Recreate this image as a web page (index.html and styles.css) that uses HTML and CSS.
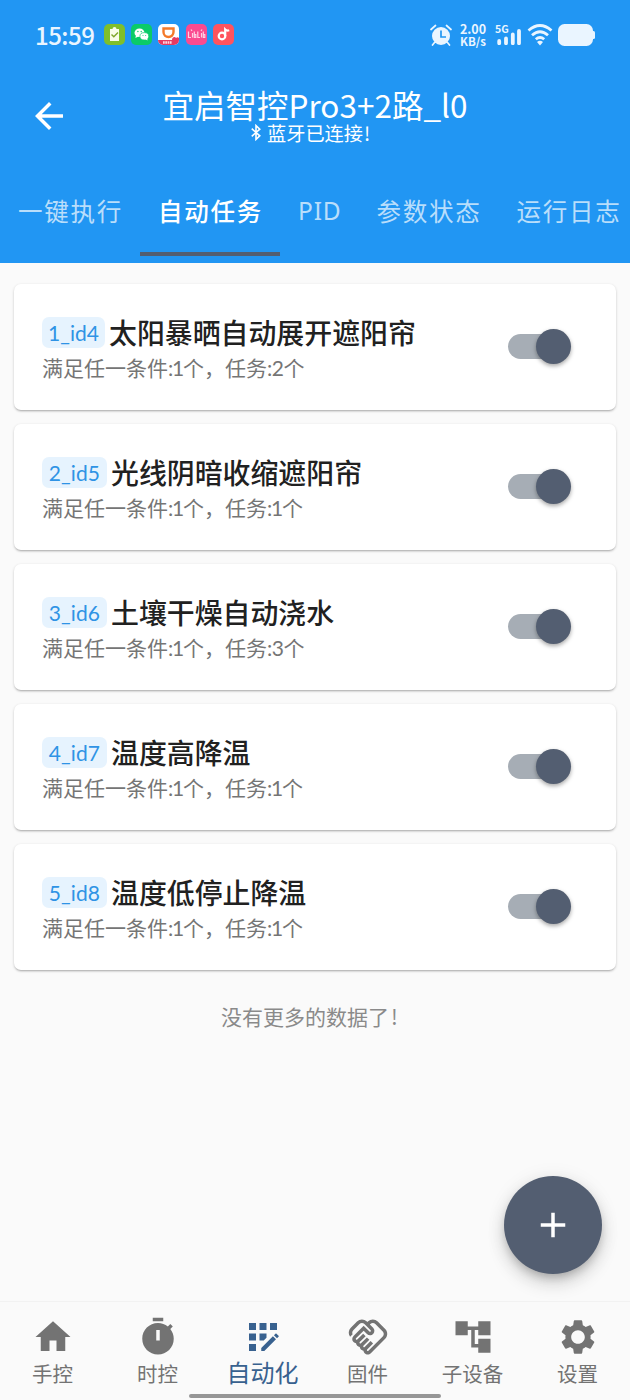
FILE: index.html
```html
<!DOCTYPE html>
<html lang="zh-CN">
<head>
<meta charset="utf-8">
<title>自动任务</title>
<link rel="stylesheet" href="styles.css">
</head>
<body>
<div class="screen">
  <header class="header">
    <div class="status">
      <div class="status-left">
        <span class="clock">15:59</span>
        <svg class="app" viewBox="0 0 21 21"><rect width="21" height="21" rx="5" fill="#7fbf2b"/><path d="M6 5h2.500a2 2 0 0 1 4 0H15v12H6z" fill="#f8fce8"/><path d="M7.500 10.500l2.300 2.300 4.200-4.300" fill="none" stroke="#7fa52b" stroke-width="1.400"/></svg>
        <svg class="app" viewBox="0 0 21 21"><rect width="21" height="21" rx="5" fill="#0bcb68"/><ellipse cx="8.500" cy="8.700" rx="5" ry="4.300" fill="#fff"/><path d="M5 11l-.6 3 3-1.500z" fill="#fff"/><ellipse cx="13.300" cy="12.300" rx="4.400" ry="3.700" fill="#fff" stroke="#0bcb68" stroke-width=".7"/><path d="M14 15l2.500 1.600-.3-2.600z" fill="#fff"/><g fill="#0bcb68"><circle cx="6.900" cy="7.500" r=".7"/><circle cx="10.200" cy="7.500" r=".7"/><circle cx="12" cy="11.500" r=".5"/><circle cx="14.700" cy="11.500" r=".5"/></g></svg>
        <svg class="app" viewBox="0 0 21 21"><rect width="21" height="21" rx="5" fill="#fff"/><path d="M5.500 4.500h10v3.500a5 5 0 0 1-10 0z" fill="none" stroke="#f47a2a" stroke-width="2.400"/><path d="M0 16h14c0-3 3-4 4-2 1-1 2-1 3 0v2a5 5 0 0 1-5 5H5a5 5 0 0 1-5-5z" fill="#e63b62"/><path d="M5 18.500h9" stroke="#ffd7df" stroke-width="2.400" stroke-dasharray="1.700 .6"/></svg>
        <svg class="app" viewBox="0 0 21 21"><rect width="21" height="21" rx="5" fill="#fb4a8f"/><path d="M2.500 7.500v6H5M6.500 9v4.500M8.300 7.500v6h1.500v-3H8.300M11.800 7.500v6H14M15.500 9v4.500M17.300 7.500v6h1.500v-3h-1.500M6 7L5 5.500M15 7l1-1.500" fill="none" stroke="#ffd0e4" stroke-width="1.200"/></svg>
        <svg class="app" viewBox="0 0 21 21"><rect width="21" height="21" rx="5" fill="#ff535e"/><circle cx="9" cy="12" r="3.300" fill="none" stroke="#fff" stroke-width="2.200"/><path d="M12.200 12V5.500q1.500 1.500 4 .8" fill="none" stroke="#fff" stroke-width="2.200"/></svg>
      </div>
      <div class="status-right">
        <svg class="alarm" viewBox="0 0 22 22"><circle cx="11" cy="12" r="9" fill="#eaf5ff"/><path d="M11 6.500V13h5" fill="none" stroke="#2196f3" stroke-width="1.700"/><path d="M1 5.500l4.500-4M21 5.500l-4.500-4M4.500 18.500L2.500 21M17.500 18.500l2 2.500" fill="none" stroke="#eaf5ff" stroke-width="1.700" stroke-linecap="round"/></svg>
        <div class="speed"><span>2.00</span><span>KB/s</span></div>
        <div class="cell"><span>5G</span><svg viewBox="0 0 24 16"><path d="M2.200 12v2.300M9 9.500v4.800M15.800 5.500v8.800M22 2v12.300" fill="none" stroke="#eaf5ff" stroke-width="3.800" stroke-linecap="round"/></svg></div>
        <svg class="wifi" viewBox="0 0 26 22"><path d="M1.500 6.500Q13-3.500 24.500 6.500M5 11.200q8-7 16 0M8.800 15.300q4.200-3.600 8.400 0" fill="none" stroke="#eaf5ff" stroke-width="2.800"/><path d="M10 18q3-2.300 6 0l-3 3.500z" fill="#eaf5ff"/></svg>
        <svg class="battery" viewBox="0 0 37 22"><rect width="35" height="22" rx="6.500" fill="#eaf5ff"/><path d="M34.500 7h1a1.500 1.500 0 0 1 1.500 1.500v5a1.500 1.500 0 0 1-1.500 1.500h-1z" fill="#eaf5ff"/></svg>
      </div>
    </div>
    <div class="appbar">
      <svg class="back" viewBox="0 0 24 24"><path d="M20 11H7.830l5.590-5.590L12 4l-8 8 8 8 1.410-1.410L7.830 13H20z"/></svg>
      <div class="heading">
        <h1>宜启智控Pro3+2路_l0</h1>
        <p><svg class="bt" viewBox="0 0 12 18"><path d="M1.500 5L10 12.500 6 16.300V1.700L10 5.500 1.500 13" fill="none" stroke="#fff" stroke-width="1.700"/></svg><span>蓝牙已连接</span><span class="bang">!</span></p>
      </div>
    </div>
    <nav class="tabs">
      <span>一键执行</span><span class="on">自动任务</span><span class="pid">PID</span><span>参数状态</span><span>运行日志</span>
    </nav>
  </header>
  <main class="list">
    <section class="card"><div><h2><span class="tag first">1_id4</span>太阳暴晒自动展开遮阳帘</h2><p>满足任一条件<b class="one">:1</b>个，任务<b>:2</b>个</p></div><i class="switch"></i></section>
    <section class="card"><div><h2><span class="tag">2_id5</span>光线阴暗收缩遮阳帘</h2><p>满足任一条件<b class="one">:1</b>个，任务<b class="one">:1</b>个</p></div><i class="switch"></i></section>
    <section class="card"><div><h2><span class="tag">3_id6</span>土壤干燥自动浇水</h2><p>满足任一条件<b class="one">:1</b>个，任务<b>:3</b>个</p></div><i class="switch"></i></section>
    <section class="card"><div><h2><span class="tag">4_id7</span>温度高降温</h2><p>满足任一条件<b class="one">:1</b>个，任务<b class="one">:1</b>个</p></div><i class="switch"></i></section>
    <section class="card"><div><h2><span class="tag">5_id8</span>温度低停止降温</h2><p>满足任一条件<b class="one">:1</b>个，任务<b class="one">:1</b>个</p></div><i class="switch"></i></section>
    <p class="end">没有更多的数据了<span class="bang">!</span></p>
  </main>
  <div class="fab"><svg viewBox="0 0 24 24"><path d="M19 13h-6v6h-2v-6H5v-2h6V5h2v6h6z"/></svg></div>
  <nav class="bottom">
    <div class="item"><svg viewBox="0 0 24 24"><path d="M10 20v-6h4v6h5v-8h3L12 3 2 12h3v8z"/></svg><span>手控</span></div>
    <div class="item"><svg viewBox="0 0 24 24"><path d="M9 1h6v2H9zm10.030 6.390 1.420-1.420c-.43-.51-.9-.99-1.410-1.410l-1.420 1.420C16.070 4.740 14.120 4 12 4c-4.970 0-9 4.030-9 9s4.020 9 9 9 9-4.030 9-9c0-2.120-.74-4.070-1.970-5.610zM13 14h-2V8h2v6z"/></svg><span>时控</span></div>
    <div class="item active"><svg viewBox="0 0 24 24"><path d="M10 4h4v4h-4zM4 16h4v4H4zM4 10h4v4H4zM4 4h4v4H4zM14 12.420V10h-4v4h2.420zM20.880 11.290l-1.170-1.170c-.16-.16-.42-.16-.58 0L18.250 11 20 12.750l.88-.88c.16-.16.16-.42 0-.58zM11 18.250V20h1.750l6.670-6.670-1.750-1.750zM16 4h4v4h-4z"/></svg><span>自动化</span></div>
    <div class="item"><svg viewBox="0 0 24 24"><path d="M12.220 19.850c-.18.18-.5.21-.71 0-.18-.18-.21-.5 0-.71l3.390-3.390-1.410-1.410-3.390 3.390c-.19.2-.51.19-.71 0-.21-.21-.18-.53 0-.71l3.390-3.390-1.410-1.410-3.390 3.390c-.18.18-.5.21-.71 0-.19-.19-.19-.51 0-.71l3.390-3.390-1.420-1.410-3.390 3.390c-.18.18-.5.21-.71 0-.19-.2-.19-.51 0-.71L9.520 8.400l1.870 1.860c.95.95 2.590.94 3.540 0 .98-.98.98-2.560 0-3.540l-1.860-1.860.28-.28c.78-.78 2.050-.78 2.830 0l4.240 4.240c.78.78.78 2.050 0 2.830l-8.200 8.200zm9.610-6.780c1.560-1.560 1.560-4.090 0-5.660l-4.240-4.240c-1.560-1.560-4.090-1.560-5.660 0l-.28.28-.28-.28c-1.560-1.560-4.090-1.560-5.660 0L2.170 6.710C.75 8.130.62 10.340 1.770 11.900l1.450-1.450c-.39-.75-.26-1.700.37-2.330l3.540-3.540c.78-.78 2.050-.78 2.830 0l3.560 3.560c.18.18.21.5 0 .71-.21.21-.53.18-.71 0L9.520 5.570l-5.800 5.790c-.98.97-.98 2.560 0 3.540.39.39.89.63 1.420.7.07.52.3 1.020.7 1.420.4.4.9.63 1.420.7.07.52.3 1.020.7 1.420.4.4.9.63 1.420.7.07.54.31 1.030.7 1.420.47.47 1.100.73 1.770.73s1.300-.26 1.770-.73l8.210-8.190z"/></svg><span>固件</span></div>
    <div class="item"><svg viewBox="0 0 24 24"><path d="M22 11V3h-7v3H9V3H2v8h7V8h2v10h4v3h7v-8h-7v3h-2V8h2v3z"/></svg><span>子设备</span></div>
    <div class="item"><svg viewBox="0 0 24 24"><path d="M19.140 12.940c.04-.3.060-.61.060-.94 0-.32-.02-.64-.07-.94l2.030-1.580c.18-.14.230-.41.120-.61l-1.920-3.320c-.12-.22-.37-.29-.59-.22l-2.390.96c-.5-.38-1.030-.7-1.620-.94l-.36-2.540c-.04-.24-.24-.41-.48-.41h-3.840c-.24 0-.43.17-.47.41l-.36 2.540c-.59.24-1.130.57-1.620.94l-2.390-.96c-.22-.08-.47 0-.59.22L2.740 8.870c-.12.210-.08.470.12.610l2.030 1.580c-.05.3-.09.63-.09.94s.02.64.07.94l-2.030 1.580c-.18.14-.23.410-.12.610l1.920 3.320c.12.220.37.290.59.220l2.390-.96c.5.380 1.030.7 1.620.94l.36 2.540c.05.240.24.410.48.410h3.840c.24 0 .44-.17.47-.41l.36-2.540c.59-.24 1.130-.56 1.620-.94l2.390.96c.22.080.47 0 .59-.22l1.920-3.320c.12-.22.070-.47-.12-.61l-2.010-1.580zM12 15.900c-2.150 0-3.900-1.750-3.900-3.900s1.750-3.900 3.900-3.900 3.900 1.750 3.900 3.900-1.750 3.900-3.900 3.900z"/></svg><span>设置</span></div>
    <i class="gesture"></i>
  </nav>
</div>
</body>
</html>
```
FILE: styles.css
```css
* { box-sizing: border-box; margin: 0; padding: 0; }
body { background: #fafafa; font-family: "Noto Sans CJK SC", sans-serif; }
svg { display: block; flex: none; }
.screen { position: relative; width: 630px; height: 1400px; display: flex; flex-direction: column; overflow: hidden; }

.header { height: 262.500px; flex: none; background: #2196f3; color: #fff; display: flex; flex-direction: column; }
.status { height: 69px; flex: none; display: flex; justify-content: space-between; padding: 0 35px; color: #eaf5ff; }
.status-left, .status-right { display: flex; align-items: center; }
.clock { width: 69px; font: 500 24px/24px "Noto Sans CJK SC", sans-serif; letter-spacing: -.5px; white-space: nowrap; }
.app { width: 21px; height: 21px; margin-right: 6.200px; }
.alarm { width: 22px; height: 22px; }
.speed { width: 28px; margin-left: 7px; display: flex; flex-direction: column; align-items: center; font: 700 12.500px/12px "Noto Sans CJK SC", sans-serif; }
.speed span:last-child { font-size: 11.500px; }
.cell { width: 26px; height: 24px; margin: 0 6px 0 8px; font: 700 10.500px/11px "Noto Sans CJK SC", sans-serif; }
.cell span { display: block; }
.cell svg { width: 24px; height: 16px; margin: -5px 0 0 2px; }
.wifi { width: 26px; height: 22px; }
.battery { width: 37px; height: 22px; margin-left: 5px; }

.appbar { height: 93px; flex: none; display: flex; padding: 0 28px; align-items: center; }
.back { width: 42px; height: 42px; fill: #fff; }
.heading { flex: 1; padding-right: 42px; display: flex; flex-direction: column; align-items: center; }
.heading h1 { font-size: 31.500px; line-height: 33px; font-weight: 400; white-space: nowrap; }
.heading p { display: flex; align-items: center; margin: 1px 7px 0 0; font-size: 19.200px; line-height: 22px; }
.bt { width: 12px; height: 17px; margin-right: 5px; }
.bang { display: inline-block; margin-left: 1px; width: 9px; }
.tabs { height: 100px; display: flex; white-space: nowrap; overflow: hidden; font-size: 24.500px; letter-spacing: 1.700px; line-height: 98px; color: rgba(255,255,255,.7); }
.tabs span { width: 140px; flex: none; text-align: center; padding-left: 1px; height: 94px; }
.tabs .on { color: #fff; font-weight: 500; border-bottom: 4px solid #535e71; }
.tabs .pid { width: 78.500px; font-family: "Noto Sans", "Noto Sans CJK SC", sans-serif; letter-spacing: .8px; }

.list { flex: 1; padding: 21px 14px 0; }
.card { height: 126px; margin-bottom: 14px; padding: 6px 51.500px 0 28px; display: flex; justify-content: space-between; align-items: center; background: #fff; border-radius: 7px; box-shadow: 0 2px 2px -1px rgba(0,0,0,.2), 0 1px 3px rgba(0,0,0,.18); }
.card h2 { display: flex; align-items: center; height: 35px; font-size: 27.900px; font-weight: 500; line-height: 35px; color: #212121; white-space: nowrap; }
.tag { width: 65px; height: 31px; margin-right: 4px; border-radius: 7px; background: #e6f3fe; color: #2f93e5; text-align: center; font: 400 21px/31px Lato, "Noto Sans CJK SC", sans-serif; letter-spacing: .1px; }
.tag.first { width: 63px; letter-spacing: 0; }
.card p { font-size: 21px; line-height: 35px; color: #757575; white-space: nowrap; }
.card b { font: 400 21px/21px Lato, "Noto Sans CJK SC", sans-serif; letter-spacing: -.5px; }
.card .one { letter-spacing: -1.200px; }
.switch { position: relative; width: 57px; height: 24.500px; margin-top: -6px; border-radius: 13px; background: #a6adb5; }
.switch::after { content: ""; position: absolute; right: -6px; top: -5.250px; width: 35px; height: 35px; border-radius: 50%; background: #535e71; box-shadow: 0 2px 4px rgba(0,0,0,.35); }
.end { text-align: center; padding: 15px 10px 0 0; font-size: 21px; line-height: 35px; color: #8a8a8a; }

.fab { position: absolute; left: 504px; top: 1176px; width: 98px; height: 98px; border-radius: 50%; background: #535e71; display: flex; align-items: center; justify-content: center; box-shadow: 0 5px 9px -2px rgba(0,0,0,.2), 0 10px 18px rgba(0,0,0,.14), 0 2px 20px rgba(0,0,0,.08); }
.fab svg { width: 42px; height: 42px; fill: #fff; }
.bottom { position: relative; flex: none; height: 99px; display: flex; border-top: 1px solid #f2f2f2; background: #fafafa; }
.item { width: 105px; display: flex; flex-direction: column; align-items: center; padding-top: 14px; color: #737373; font-size: 20.500px; white-space: nowrap; }
.item svg { width: 42px; height: 42px; fill: currentColor; }
.item span { height: 30px; line-height: 30px; }
.active { color: #38618f; font-size: 24px; }
.active span { line-height: 28px; }
.gesture { position: absolute; left: 189px; bottom: 2px; width: 252px; height: 4px; border-radius: 2px; background: #969696; }
```
